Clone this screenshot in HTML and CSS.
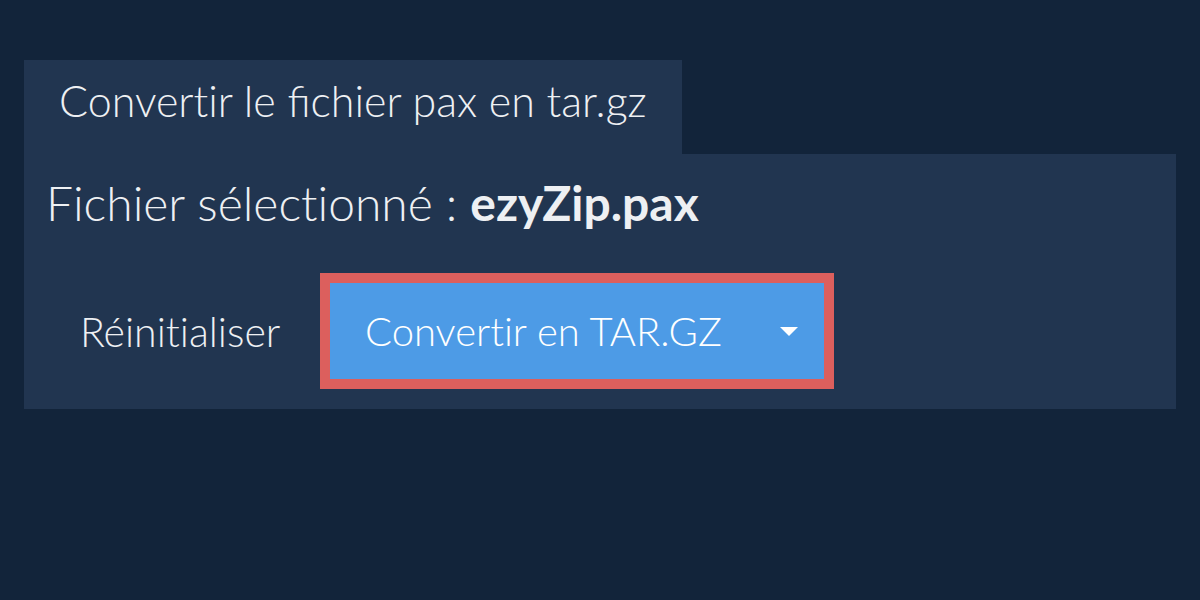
FILE: index.html
```html
<!DOCTYPE html>
<html lang="fr">
<head>
<meta charset="utf-8">
<link rel="stylesheet" href="styles.css">
</head>
<body>
<div class="wrap">
  <div class="tab">Convert&zwnj;ir le fichier pax en tar.gz</div>
  <div class="panel">
    <div class="selected">Fichier sélect&zwnj;ionné : <b>ezyZip.pax</b></div>
    <div class="actions">
      <button class="reset">Réinit&zwnj;ialiser</button>
      <div class="convert-outline">
        <button class="convert">
          <span class="label">Convert&zwnj;ir en TAR.GZ</span>
          <span class="caret"></span>
        </button>
      </div>
    </div>
  </div>
</div>
</body>
</html>
```
FILE: styles.css
```css
html, body {
  margin: 0;
  padding: 0;
  background: #12243a;
  font-family: Lato, "Open Sans", sans-serif;
  font-weight: 300;
  color: #eef0f3;
}
.wrap {
  padding: 60px 24px 0 24px;
}
.tab {
  display: inline-block;
  box-sizing: border-box;
  width: 658px;
  height: 94px;
  background: #213550;
  padding: 15px 0 0 35px;
  font-size: 43px;
  line-height: 51px;
  white-space: nowrap;
}
.panel {
  box-sizing: border-box;
  height: 255px;
  background: #213550;
  padding: 20px 22px 0 22px;
}
.selected {
  font-size: 48px;
  line-height: 58px;
  white-space: nowrap;
}
.selected b {
  font-weight: 700;
}
.actions {
  display: flex;
  align-items: center;
  margin-top: 41px;
  margin-left: -22px;
}
.reset {
  box-sizing: border-box;
  background: transparent;
  border: 0;
  color: #eef0f3;
  font-family: inherit;
  font-weight: 300;
  font-size: 41px;
  line-height: 49px;
  padding: 0 0 0 56px;
  width: 296px;
  text-align: left;
}
.convert-outline {
  border: 10px solid #dc5f5d;
  display: flex;
}
.convert {
  display: flex;
  align-items: center;
  box-sizing: border-box;
  width: 494px;
  height: 96px;
  background: #4d9be6;
  border: 0;
  color: #ffffff;
  font-family: inherit;
  font-weight: 300;
  font-size: 40px;
  line-height: 48px;
  padding: 0 26px 0 35px;
}
.label {
  flex: 1;
  text-align: left;
}
.caret {
  width: 0;
  height: 0;
  border-left: 9px solid transparent;
  border-right: 9px solid transparent;
  border-top: 9px solid #ffffff;
}
```
